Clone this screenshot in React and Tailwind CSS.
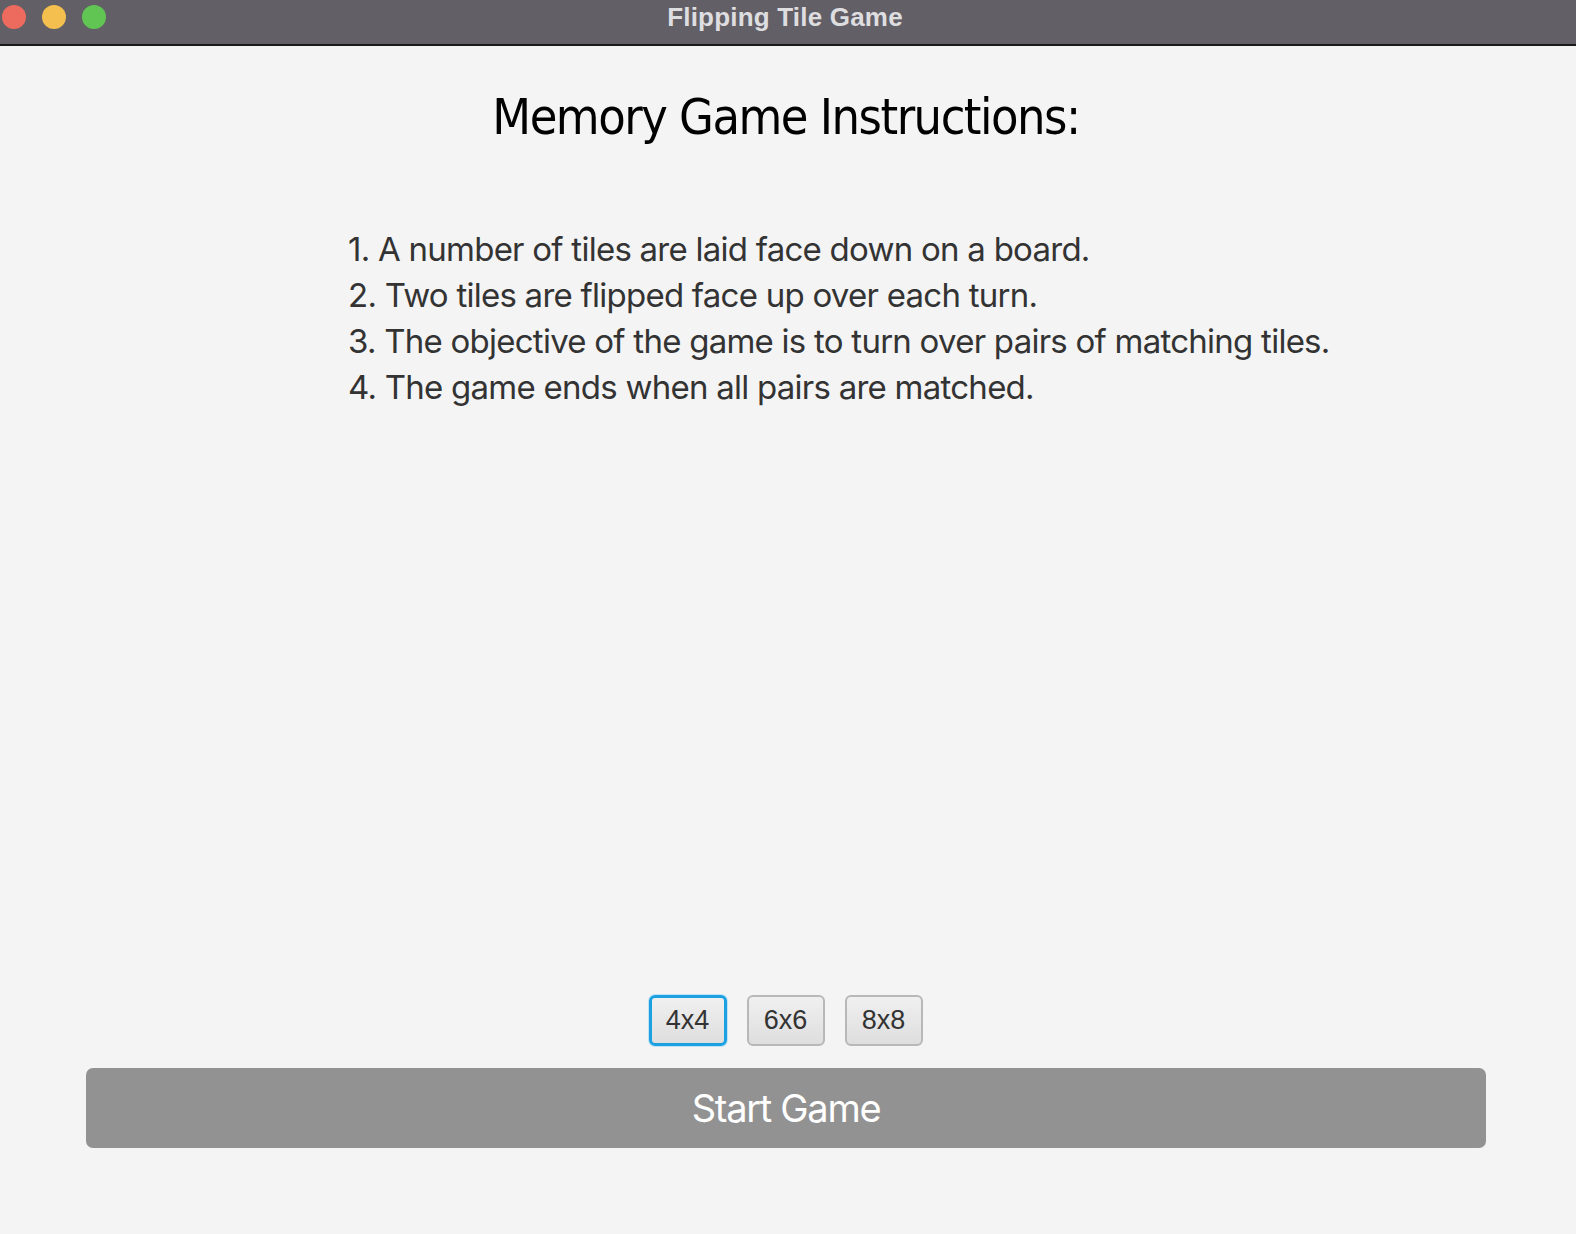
import React, { useState } from 'react';

const sizes = ['4x4', '6x6', '8x8'];

const steps = [
  '1. A number of tiles are laid face down on a board.',
  '2. Two tiles are flipped face up over each turn.',
  '3. The objective of the game is to turn over pairs of matching tiles.',
  '4. The game ends when all pairs are matched.',
];

const TitleBar = () => (
  <div className="relative h-[46px] bg-[#626066] border-b-2 border-[#1a1a1a] flex items-center justify-center">
    <div className="absolute left-[2px] top-[5px] flex gap-[16px]">
      <span className="w-[24px] h-[24px] rounded-full bg-[#ed6a5e]"></span>
      <span className="w-[24px] h-[24px] rounded-full bg-[#f5bf4f]"></span>
      <span className="w-[24px] h-[24px] rounded-full bg-[#61c554]"></span>
    </div>
    <span className="-mt-[10px] pr-[6px] text-[26px] font-bold text-[#dedde0] font-['Liberation_Sans',sans-serif] tracking-[0.2px]">
      Flipping Tile Game
    </span>
  </div>
);

export default function App() {
  const [size, setSize] = useState('4x4');

  return (
    <div className="w-[1576px] h-[1234px] bg-[#f4f4f4] flex flex-col overflow-hidden">
      <TitleBar />

      <div className="flex-1 flex flex-col">
        <h1 className="pt-[41px] pr-[4px] text-center text-[50px] leading-[60px] text-black font-['DejaVu_Sans_Condensed','DejaVu_Sans',sans-serif] tracking-[-1.5px]">
          Memory Game Instructions:
        </h1>

        <div className="mt-[79px] pl-[348px] text-[33px] leading-[46px] text-[#333333] font-['Inter',sans-serif] tracking-[-0.75px]">
          {steps.map((s) => (
            <div key={s}>{s}</div>
          ))}
        </div>

        {/* board size picker */}
        <div className="mt-auto flex justify-center gap-[20px] pr-[5px]">
          {sizes.map((s) => (
            <button
              key={s}
              onClick={() => setSize(s)}
              className={`w-[78px] h-[51px] rounded-[6px] bg-gradient-to-b from-[#f0f0f0] to-[#dedede] text-[27px] text-[#333333] font-['Liberation_Sans',sans-serif] ${
                size === s
                  ? 'border-[3px] border-[#1ba1e2] shadow-[0_0_0_1px_#bde3f5]'
                  : 'border-2 border-[#b8b8b8]'
              }`}
            >
              {s}
            </button>
          ))}
        </div>

        <div className="mt-[22px] mb-[86px] px-[86px]">
          <button className="w-[1400px] h-[80px] rounded-[7px] bg-[#929292] text-white text-[38px] font-['Inter',sans-serif] tracking-[-1.3px]">
            Start Game
          </button>
        </div>
      </div>
    </div>
  );
}
